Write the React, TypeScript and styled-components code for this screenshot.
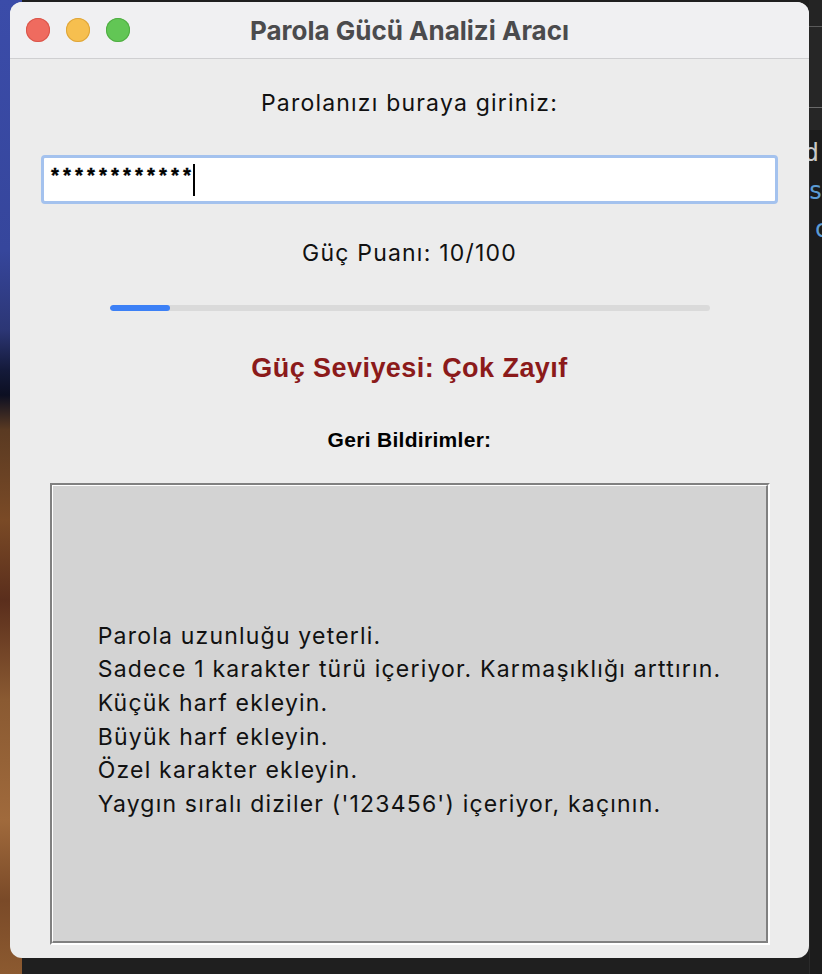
import React from "react";
import styled, { createGlobalStyle } from "styled-components";

const Global = createGlobalStyle`
  html, body { margin: 0; padding: 0; }
  body { background: #1e1e1e; font-family: "Liberation Sans", Arial, sans-serif; }
`;

const Desktop = styled.div`
  width: 822px;
  height: 974px;
  overflow: hidden;
  display: flex;
  align-items: flex-start;
  background-color: #1f1f1f;
  background-image: linear-gradient(
    to bottom,
    #3b4ca9 0px,
    #36469c 250px,
    #2c3675 330px,
    #141a3a 370px,
    #0c0f22 395px,
    #5a3a22 430px,
    #7a4a26 520px,
    #5a2e1c 600px,
    #8a5a32 700px,
    #a06a3c 820px,
    #7a4a28 900px,
    #8c5a30 974px
  );
  background-size: 22px 100%;
  background-repeat: no-repeat;
`;

const LeftGap = styled.div`
  width: 10px;
  flex: none;
`;

const RightStrip = styled.div`
  flex: 1;
  height: 974px;
  display: flex;
  flex-direction: column;
  background: #262626;
  overflow: hidden;
`;

const StripLine = styled.div<{ $h: number; $bg: string }>`
  height: ${(p) => p.$h}px;
  background: ${(p) => p.$bg};
  flex: none;
`;

const Code = styled.div`
  flex: 1;
  background: #1c1c1c;
  border-left: 1px solid #2a2a2a;
  padding: 4px 0 0 0;
  font-family: "DejaVu Sans Mono", monospace;
  font-size: 25px;
  line-height: 38px;
  white-space: nowrap;
`;

const CodeLine = styled.div<{ $c: string; $x: number }>`
  color: ${(p) => p.$c};
  margin-left: ${(p) => p.$x}px;
`;

const Window = styled.div`
  margin-top: 2px;
  width: 799px;
  height: 956px;
  flex: none;
  border-radius: 12px;
  overflow: hidden;
  background: #ececec;
  display: flex;
  flex-direction: column;
`;

const TitleBar = styled.div`
  height: 56px;
  flex: none;
  background: #f0f0f2;
  border-bottom: 1px solid #cfcfd1;
  display: flex;
  align-items: center;
  padding-left: 16px;
`;

const Lights = styled.div`
  display: flex;
  gap: 16px;
`;

const Light = styled.div<{ $c: string; $b: string }>`
  width: 24px;
  height: 24px;
  border-radius: 50%;
  background: ${(p) => p.$c};
  box-shadow: inset 0 0 0 1px ${(p) => p.$b};
`;

const Title = styled.div`
  flex: 1;
  text-align: center;
  margin-left: -120px;
  font-family: Inter, "Liberation Sans", Arial, sans-serif;
  font-weight: 700;
  font-size: 26px;
  color: #4b4b4d;
`;

const Content = styled.div`
  flex: 1;
  display: flex;
  flex-direction: column;
  align-items: center;
`;

const Label = styled.div<{ $top: number }>`
  margin-top: ${(p) => p.$top}px;
  font-family: Inter, "Liberation Sans", Arial, sans-serif;
  font-size: 23px;
  letter-spacing: 1.2px;
  line-height: 24px;
  color: #111;
`;

const EntryRing = styled.div`
  margin-top: 40px;
  width: 737px;
  height: 49px;
  box-sizing: border-box;
  border: 3px solid #a4c2ee;
  border-radius: 4px;
  background: #fff;
  display: flex;
  align-items: center;
  padding-left: 5px;
`;

const Stars = styled.span`
  font-family: "Liberation Mono", monospace;
  font-weight: 700;
  font-size: 20px;
  color: #000;
  line-height: 24px;
  margin-top: -4px;
  -webkit-text-stroke: 0.4px #000;
`;

const Caret = styled.span`
  width: 2px;
  height: 32px;
  background: #000;
`;

const Track = styled.div`
  margin-top: 40px;
  width: 600px;
  height: 6px;
  border-radius: 3px;
  background: #dadada;
  overflow: hidden;
`;

const Fill = styled.div`
  height: 100%;
  border-radius: 3px;
  background: #3c80f6;
`;

const Level = styled.div`
  margin-top: 42px;
  font-family: "Liberation Sans", Arial, sans-serif;
  font-weight: 700;
  font-size: 27px;
  letter-spacing: 0.45px;
  line-height: 30px;
  color: #8b1a1a;
`;

const SubHead = styled.div`
  margin-top: 46px;
  font-family: "Liberation Sans", Arial, sans-serif;
  font-weight: 700;
  font-size: 21px;
  letter-spacing: 0.3px;
  line-height: 22px;
  color: #000;
`;

const GrooveOuter = styled.div`
  margin-top: 32px;
  width: 720px;
  height: 462px;
  box-sizing: border-box;
  border-style: solid;
  border-width: 2px;
  border-color: #808080 #ffffff #ffffff #808080;
  margin-left: 1px;
`;

const GrooveInner = styled.div`
  height: 100%;
  box-sizing: border-box;
  border-style: solid;
  border-width: 1px 2px 2px 1px;
  border-color: #ffffff #808080 #808080 #ffffff;
  background: #d3d3d3;
  display: flex;
  align-items: center;
  justify-content: center;
  padding-top: 14px;
`;

const FeedbackText = styled.div`
  font-family: Inter, "Liberation Sans", Arial, sans-serif;
  font-size: 23px;
  letter-spacing: 1.2px;
  line-height: 33.6px;
  color: #111;
  text-align: left;
  white-space: pre;
`;

const feedback = [
  "Parola uzunluğu yeterli.",
  "Sadece 1 karakter türü içeriyor. Karmaşıklığı arttırın.",
  "Küçük harf ekleyin.",
  "Büyük harf ekleyin.",
  "Özel karakter ekleyin.",
  "Yaygın sıralı diziler ('123456') içeriyor, kaçının.",
];

export default function App() {
  const score = 10;
  return (
    <>
      <Global />
      <Desktop>
        <LeftGap />
        <Window>
          <TitleBar>
            <Lights>
              <Light $c="#ef6b5f" $b="#d9564b" />
              <Light $c="#f6bf4f" $b="#dea53a" />
              <Light $c="#62c655" $b="#50ad43" />
            </Lights>
            <Title>Parola Gücü Analizi Aracı</Title>
          </TitleBar>
          <Content>
            <Label $top={32}>Parolanızı buraya giriniz:</Label>
            <EntryRing>
              <Stars>************</Stars>
              <Caret />
            </EntryRing>
            <Label $top={37}>Güç Puanı: {score}/100</Label>
            <Track>
              <Fill style={{ width: `${score}%` }} />
            </Track>
            <Level>Güç Seviyesi: Çok Zayıf</Level>
            <SubHead>Geri Bildirimler:</SubHead>
            <GrooveOuter>
              <GrooveInner>
                <FeedbackText>{feedback.join("\n")}</FeedbackText>
              </GrooveInner>
            </GrooveOuter>
          </Content>
        </Window>
        <RightStrip>
          <StripLine $h={26} $bg="#242424" />
          <StripLine $h={1} $bg="#5a5a5a" />
          <StripLine $h={80} $bg="#262626" />
          <StripLine $h={1} $bg="#6a6a6a" />
          <StripLine $h={22} $bg="#262626" />
          <Code>
            <CodeLine $c="#c8c8c8" $x={-6}>d</CodeLine>
            <CodeLine $c="#5b9bd5" $x={-2}>ss</CodeLine>
            <CodeLine $c="#5b9bd5" $x={4}>c</CodeLine>
          </Code>
        </RightStrip>
      </Desktop>
    </>
  );
}
